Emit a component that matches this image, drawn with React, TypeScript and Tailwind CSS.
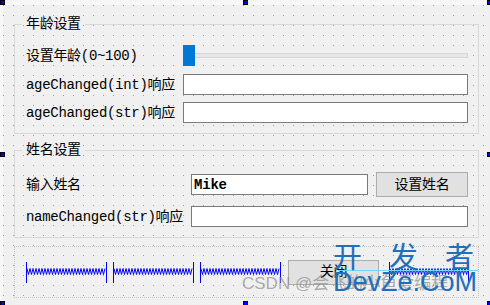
import type { ReactNode } from 'react'

// Qt Designer form preview: two group boxes + a horizontal layout with spacers

const txt =
  "text-[14px] leading-[16px] tracking-[-0.3px] text-black whitespace-nowrap font-['Liberation_Mono','Noto_Sans_CJK_SC',monospace]"

function Group({ title, className = '', children }: { title: string; className?: string; children: ReactNode }) {
  return (
    <fieldset className={`border border-[#d9d9d9] pl-[11px] pr-[10px] ${className}`}>
      <legend className={`ml-[-4px] px-[4px] ${txt} leading-[14px]`}>{title}</legend>
      {children}
    </fieldset>
  )
}

function Input({ value = '' }: { value?: string }) {
  return (
    <div className="flex-1 h-[21px] bg-white border border-[#7a7a7a] flex items-center px-[2px]">
      <span className="text-[14px] leading-none font-bold tracking-[-0.2px] font-['Liberation_Mono',monospace]">{value}</span>
    </div>
  )
}

function Button({ label, className = '' }: { label: string; className?: string }) {
  return (
    <div className={`h-[25px] bg-[#e1e1e1] border border-[#adadad] flex items-center justify-center ${className}`}>
      <span className={txt}>{label}</span>
    </div>
  )
}

function Spacer({ w = 81 }: { w?: number }) {
  const pts: string[] = []
  for (let x = 1, i = 0; x <= w - 1; x += 1.5, i++) pts.push(`${x},${i % 2 ? 12.5 : 6.5}`)
  return (
    <svg width={w} height={21} className="shrink-0">
      <line x1={0.5} y1={0} x2={0.5} y2={21} stroke="#0000ff" strokeWidth={1} />
      <line x1={w - 0.5} y1={0} x2={w - 0.5} y2={21} stroke="#0000ff" strokeWidth={1} />
      <polyline points={pts.join(' ')} fill="none" stroke="#0000ff" strokeWidth={1} />
    </svg>
  )
}

function Handle({ className }: { className: string }) {
  return <div className={`absolute w-[5px] h-[5px] bg-[#0000ff] border border-black ${className}`} />
}

export default function App() {
  return (
    <div className="relative w-[490px] h-[305px] overflow-hidden bg-[#f7f7f7] pl-[3px] pt-[5px]">
      <div className="h-full bg-[#f0f0f0] bg-[radial-gradient(circle_at_0.5px_0.5px,#9a9a9a_0.6px,transparent_0.7px)] bg-[size:10px_10px] pl-[11px] pr-[11px] pt-[11px]">
        {/* 年龄设置 */}
        <Group title="年龄设置" className="pt-[13px] pb-[10px]">
          <div className="flex items-center h-[21px]">
            <span className={`${txt} w-[157px]`}>设置年龄(0~100)</span>
            <div className="relative flex-1 h-[21px] flex items-center">
              <div className="w-full h-[5px] bg-[#e7e7e7] border border-[#d6d6d6]" />
              <div className="absolute left-0 top-0 w-[12px] h-[21px] bg-[#0078d7]" />
            </div>
          </div>
          <div className="flex items-center h-[21px] mt-[8px]">
            <span className={`${txt} w-[157px]`}>ageChanged(int)响应</span>
            <Input />
          </div>
          <div className="flex items-center h-[21px] mt-[7px]">
            <span className={`${txt} w-[157px]`}>ageChanged(str)响应</span>
            <Input />
          </div>
        </Group>

        {/* 姓名设置 */}
        <Group title="姓名设置" className="mt-[8px] pt-[14px] pb-[10px]">
          <div className="flex items-center h-[25px]">
            <span className={`${txt} w-[165px]`}>输入姓名</span>
            <Input value="Mike" />
            <Button label="设置姓名" className="w-[92px] ml-[8px]" />
          </div>
          <div className="flex items-center h-[21px] mt-[9px]">
            <span className={`${txt} w-[165px]`}>nameChanged(str)响应</span>
            <Input />
          </div>
        </Group>

        {/* horizontal layout */}
        <div className="mt-[8px] h-[52px] border border-dotted border-[#c4c4c4] pl-[11px] flex items-center gap-[6px]">
          <Spacer />
          <Spacer />
          <Spacer />
          <Button label="关闭" className="w-[91px] ml-[1px]" />
          <div className="ml-[4px]">
            <Spacer w={80} />
          </div>
        </div>
      </div>

      {/* selection handles */}
      <Handle className="left-0 top-0" />
      <Handle className="left-[243px] top-0" />
      <Handle className="left-[487px] top-0" />
      <Handle className="left-0 top-[152px]" />
      <Handle className="left-[487px] top-[152px]" />
      <Handle className="left-0 top-[301px]" />
      <Handle className="left-[243px] top-[301px]" />
      <Handle className="left-[487px] top-[301px]" />

      {/* watermarks */}
      <div className="absolute left-[242px] top-[274px] text-[17px] leading-[20px] text-[#8c8c8c]/70 whitespace-nowrap font-['Liberation_Sans','Noto_Sans_CJK_SC',sans-serif]">
        CSDN @会飞的小鱼爱编程
      </div>
      <div className="absolute left-[338px] top-[270px] w-[140px] h-px bg-[#6fd6f5]" />
      <div className="absolute left-[333px] top-[237px] flex gap-[27px] text-[29px] leading-[36px] text-[#1f6fba] whitespace-nowrap font-['Noto_Sans_CJK_SC',sans-serif]">
        <span>开</span>
        <span>发</span>
        <span>者</span>
      </div>
      <div className="absolute left-[333px] top-[267px] text-[27px] leading-[31px] text-[#1f6fba] whitespace-nowrap font-['Liberation_Sans',sans-serif]">
        DevZe.CoM
      </div>
    </div>
  )
}
